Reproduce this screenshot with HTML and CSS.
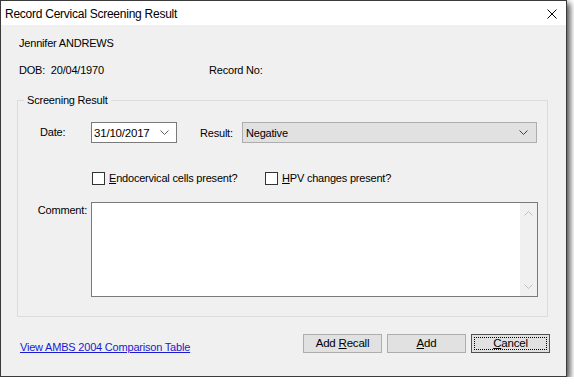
FILE: index.html
```html
<!DOCTYPE html>
<html lang="en">
<head>
    <meta charset="UTF-8">
    <title>Record Cervical Screening Result</title>
    <link rel="stylesheet" href="styles.css">
</head>
<body>
    <div class="window">
        <div class="titlebar">
            <span class="title">Record Cervical Screening Result</span>
            <svg class="close" width="10" height="10" viewBox="0 0 10 10">
                <path d="M0.5 0.5 L9.5 9.5 M9.5 0.5 L0.5 9.5" stroke="#000" stroke-width="1" fill="none"/>
            </svg>
        </div>
        <div class="content">
            <div class="patient">Jennifer ANDREWS</div>
            <div class="info">
                <span class="dob">DOB:&nbsp; 20/04/1970</span>
                <span class="record">Record No:</span>
            </div>

            <fieldset class="group">
                <legend>Screening Result</legend>

                <div class="row date-row">
                    <label class="date-lbl">Date:</label>
                    <div class="datebox">
                        <span>31/10/2017</span>
                        <svg class="chev" width="9" height="5" viewBox="0 0 9 5">
                            <path d="M0.5 0.5 L4.5 4.5 L8.5 0.5" stroke="#606060" fill="none"/>
                        </svg>
                    </div>
                    <label class="result-lbl">Result:</label>
                    <div class="combo">
                        <span>Negative</span>
                        <svg class="chev" width="9" height="5" viewBox="0 0 9 5">
                            <path d="M0.5 0.5 L4.5 4.5 L8.5 0.5" stroke="#404040" fill="none"/>
                        </svg>
                    </div>
                </div>

                <div class="row checks">
                    <label class="check first"><span class="box"></span><u>E</u>ndocervical cells present?</label>
                    <label class="check"><span class="box"></span><u>H</u>PV changes present?</label>
                </div>

                <div class="row comment-row">
                    <label class="comment-lbl">Comment:</label>
                    <div class="memo">
                        <div class="memo-text"></div>
                        <div class="scroll">
                            <svg width="9" height="5" viewBox="0 0 9 5">
                                <path d="M0.5 4.5 L4.5 0.5 L8.5 4.5" stroke="#c0c0c0" fill="none"/>
                            </svg>
                            <svg width="9" height="5" viewBox="0 0 9 5">
                                <path d="M0.5 0.5 L4.5 4.5 L8.5 0.5" stroke="#c0c0c0" fill="none"/>
                            </svg>
                        </div>
                    </div>
                </div>
            </fieldset>

            <div class="footer">
                <a href="#" class="link">View AMBS 2004 Comparison Table</a>
                <div class="buttons">
                    <button>Add <u>R</u>ecall</button>
                    <button><u>A</u>dd</button>
                    <button class="default"><u>C</u>ancel</button>
                </div>
            </div>
        </div>
    </div>
</body>
</html>
```

FILE: styles.css
```css
* { margin:0; padding:0; box-sizing:border-box;}
body { background:#fff; font-family:"Liberation Sans", Arial, sans-serif; font-size:11px; letter-spacing:-0.2px; color:#000;}

.window { width:567px; height:377px; border:1px solid #3a3a3a; background:#f0f0f0; display:flex; flex-direction:column; box-shadow:3px 3px 6px rgba(0,0,0,0.7);}

.titlebar { height:24px; background:#fff; display:flex; align-items:center; justify-content:space-between; padding:0 9px 0 4px;}
.title { font-size:12px; letter-spacing:-0.25px; padding-top:1px;}
.close { display:block; margin-top:1px;}

.content { flex:1; padding:0 18px 0 16px;}
.patient { line-height:14px; margin-top:11px; padding-left:2px;}
.info { display:flex; line-height:14px; margin-top:13px; padding-left:2px;}
.dob { width:190px;}

.group { margin-top:16px; border:1px solid #dcdcdc; padding:0 0 19px 0;}
.group legend { margin-left:6px; padding:0 3px; line-height:14px;}

.row { display:flex; align-items:flex-start;}
.date-row { margin-top:15px;}
.date-lbl { width:73px; padding-left:22px; line-height:14px; padding-top:3px;}
.datebox { width:86px; height:21px; background:#fff; border:1px solid #7a7a7a; display:flex; align-items:center; justify-content:space-between; padding:0 7px 0 2px; font-size:11.5px;}
.result-lbl { width:42px; margin-left:23px; line-height:14px; padding-top:4px;}
.combo { width:295px; height:21px; background:#e1e1e1; border:1px solid #adadad; display:flex; align-items:center; justify-content:space-between; padding:0 8px 0 3px;}
.chev { display:block;}

.checks { margin-top:29px; padding-left:74px;}
.check { display:flex; align-items:center; line-height:13px;}
.check.first { width:173px;}
.box { width:13px; height:13px; border:1px solid #333; background:#fff; margin-right:4px;}

.comment-row { margin-top:17px;}
.comment-lbl { width:73px; text-align:right; padding-right:4px; line-height:14px; padding-top:1px;}
.memo { width:447px; height:95px; background:#fff; border:1px solid #7a7a7a; display:flex;}
.memo-text { flex:1;}
.scroll { width:17px; background:#f0f0f0; display:flex; flex-direction:column; justify-content:space-between; align-items:center; padding:8px 0 7px;}
.scroll svg { display:block;}

.footer { display:flex; justify-content:space-between; align-items:flex-start; margin-top:17px; margin-right:-2px;}
.link { color:#1a1ad0; text-decoration:underline; padding-left:3px; margin-top:6px; line-height:14px;}
.buttons { display:flex; gap:5px;}
.buttons button { width:79px; height:19px; background:#e1e1e1; border:1px solid #adadad; font-family:inherit; font-size:11.5px; letter-spacing:-0.2px; color:#000; line-height:15px;}
.buttons .default { border-color:#505050; outline:1px dotted #000; outline-offset:-4px;}
```
